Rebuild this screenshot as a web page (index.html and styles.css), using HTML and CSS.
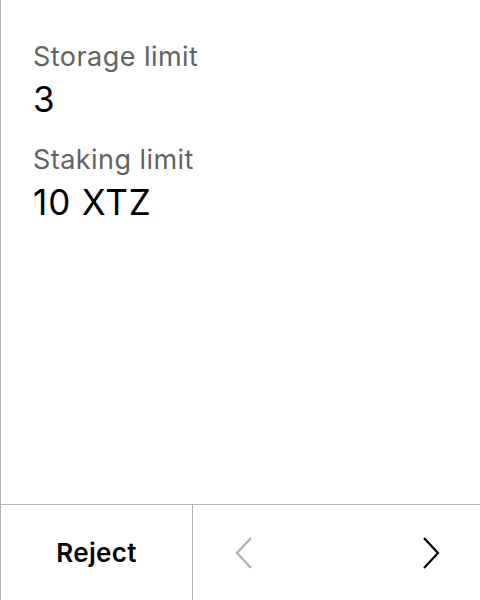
FILE: index.html
```html
<!DOCTYPE html>
<html>
<head>
<meta charset="utf-8">
<link rel="stylesheet" href="styles.css">
</head>
<body>
<div class="screen">
  <main class="content">
    <div class="field">
      <div class="label">Storage limit</div>
      <div class="value">3</div>
    </div>
    <div class="field">
      <div class="label">Staking limit</div>
      <div class="value">10 XTZ</div>
    </div>
  </main>
  <footer class="footer">
    <div class="reject">Reject</div>
    <div class="nav">
      <svg class="chev" width="18" height="32" viewBox="0 0 18 32"><path d="M16 1 L2 16 L16 31" fill="none" stroke="#b0b0b0" stroke-width="2.2"/></svg>
      <svg class="chev" width="18" height="32" viewBox="0 0 18 32"><path d="M2 1 L16 16 L2 31" fill="none" stroke="#000" stroke-width="2.2"/></svg>
    </div>
  </footer>
</div>
</body>
</html>
```
FILE: styles.css
```css
html, body { margin: 0; padding: 0; background: #fff; }
body { font-family: Inter, "Noto Sans", sans-serif; }
.screen {
  width: 479px; height: 600px;
  border-left: 1px solid #b4b4b4;
  display: flex; flex-direction: column;
}
.content { flex: 1; padding: 39px 0 0 32px; display: flex; flex-direction: column; gap: 19px; }
.label { font-size: 27px; color: #636363; line-height: 36px; letter-spacing: 0.45px; }
.value { font-size: 35px; color: #000; line-height: 47px; margin-top: 1px; letter-spacing: 0.9px; }
.footer { height: 95px; border-top: 1px solid #b4b4b4; display: flex; }
.reject { width: 191px; border-right: 1px solid #b4b4b4; display: flex; align-items: center; justify-content: center; font-size: 26px; font-weight: 600; color: #000; letter-spacing: 0.3px; }
.nav { flex: 1; display: flex; align-items: center; justify-content: space-between; padding: 0 40px 0 42px; }
.chev { display: block; }
```
